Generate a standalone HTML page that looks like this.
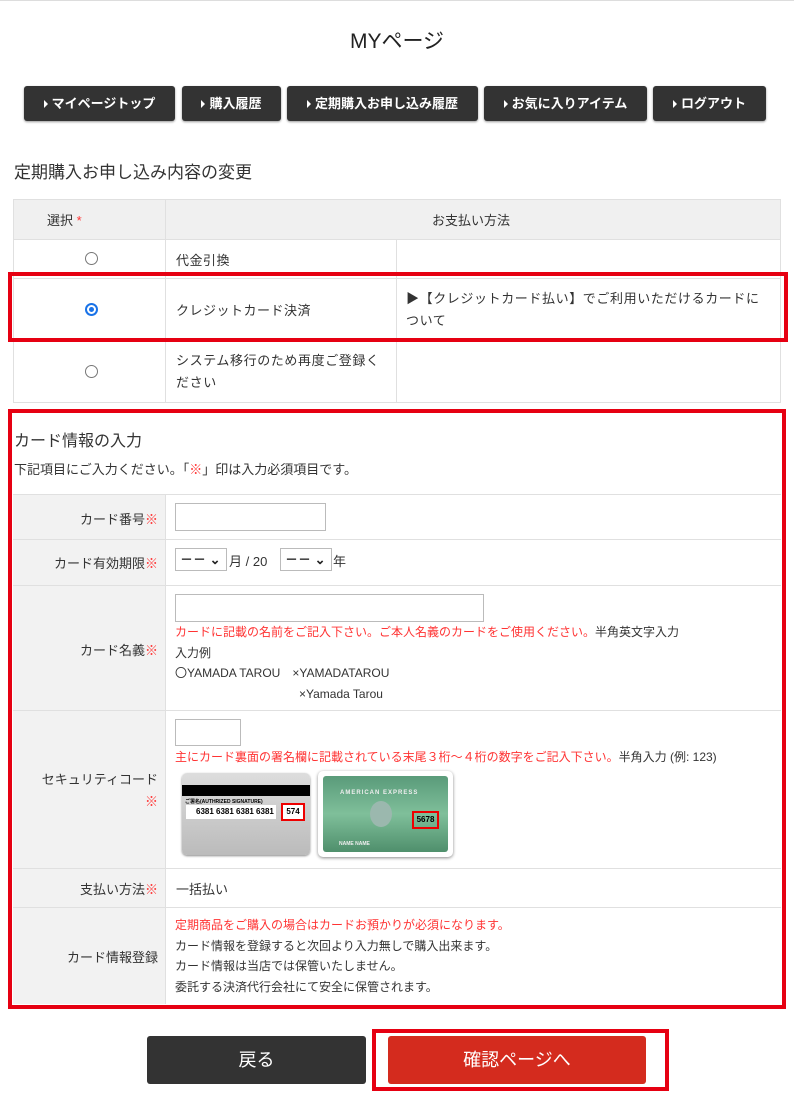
<!DOCTYPE html>
<html><head><meta charset="utf-8"><style>
*{box-sizing:border-box;margin:0;padding:0}
body{width:794px;height:1107px;background:#fff;font-family:"Liberation Sans","Noto Sans CJK JP",sans-serif;color:#333;position:relative;overflow:hidden;font-size:13px}
.a{position:absolute}
.nav{position:absolute;top:86px;height:35px;background:#333;border-radius:3px;color:#fff;font-weight:bold;font-size:13px;line-height:35px;text-align:center;box-shadow:0 1px 2px #999}
.nav:before{content:"";display:inline-block;border-left:4px solid #fff;border-top:4px solid transparent;border-bottom:4px solid transparent;margin-right:4px;vertical-align:0}
.red{position:absolute;border:4px solid #e60012}
.ln{position:absolute;background:#e0e0e0}
.r{color:#f33}
.sel{position:absolute;height:23px;border:1px solid #bbb;background:#fff;font-size:13px;line-height:21px;padding-left:4px;font-weight:bold;color:#222}
</style></head><body>
<div class="a" style="top:0;left:0;width:794px;height:1px;background:#ddd"></div>
<div class="a" style="top:25px;left:0;width:794px;text-align:center;font-size:21px;color:#222">MYページ</div>
<div class="nav" style="left:24px;width:151px">マイページトップ</div>
<div class="nav" style="left:182px;width:99px">購入履歴</div>
<div class="nav" style="left:287px;width:191px">定期購入お申し込み履歴</div>
<div class="nav" style="left:484px;width:163px">お気に入りアイテム</div>
<div class="nav" style="left:653px;width:113px">ログアウト</div>
<div class="a" style="top:158px;left:14px;font-size:17px">定期購入お申し込み内容の変更</div>
<div class="a" style="top:199px;left:13px;width:768px;height:204px;border:1px solid #e0e0e0"></div>
<div class="a" style="top:200px;left:14px;width:766px;height:39px;background:#f0f0f0"></div>
<div class="ln" style="top:239px;left:13px;width:768px;height:1px"></div>
<div class="ln" style="top:278px;left:13px;width:768px;height:1px"></div>
<div class="ln" style="top:340px;left:13px;width:768px;height:1px"></div>
<div class="ln" style="top:199px;left:165px;width:1px;height:204px"></div>
<div class="ln" style="top:239px;left:396px;width:1px;height:164px"></div>
<div class="a" style="top:210px;left:47px">選択 <span class="r">*</span></div>
<div class="a" style="top:210px;left:432px">お支払い方法</div>
<div class="a" style="top:252px;left:85px;width:13px;height:13px;border:1px solid #777;border-radius:50%"></div>
<div class="a" style="top:250px;left:176px;letter-spacing:0.5px">代金引換</div>
<div class="a" style="top:303px;left:85px;width:13px;height:13px;border:2px solid #1a73e8;border-radius:50%;padding:2px"><div style="width:5px;height:5px;background:#1a73e8;border-radius:50%"></div></div>
<div class="a" style="top:300px;left:176px;letter-spacing:0.5px">クレジットカード決済</div>
<div class="a" style="top:288px;left:406px;width:362px;line-height:22px;letter-spacing:0.6px">▶【クレジットカード払い】でご利用いただけるカードについて</div>
<div class="a" style="top:365px;left:85px;width:13px;height:13px;border:1px solid #777;border-radius:50%"></div>
<div class="a" style="top:350px;left:176px;width:215px;line-height:22px;letter-spacing:0.6px">システム移行のため再度ご登録ください</div>
<div class="red" style="top:272px;left:8px;width:780px;height:70px"></div>
<div class="a" style="top:427px;left:14px;font-size:16px">カード情報の入力</div>
<div class="a" style="top:459px;left:14px">下記項目にご入力ください。「<span class="r">※</span>」印は入力必須項目です。</div>
<div class="a" style="top:494px;left:13px;width:153px;height:510px;background:#f2f2f2"></div>
<div class="ln" style="top:494px;left:13px;width:768px;height:1px"></div>
<div class="ln" style="top:539px;left:13px;width:768px;height:1px"></div>
<div class="ln" style="top:585px;left:13px;width:768px;height:1px"></div>
<div class="ln" style="top:710px;left:13px;width:768px;height:1px"></div>
<div class="ln" style="top:868px;left:13px;width:768px;height:1px"></div>
<div class="ln" style="top:907px;left:13px;width:768px;height:1px"></div>
<div class="ln" style="top:494px;left:165px;width:1px;height:510px"></div>
<div class="a" style="top:509px;left:14px;width:144px;text-align:right">カード番号<span class="r">※</span></div>
<div class="a" style="top:503px;left:175px;width:151px;height:28px;border:1px solid #bbb"></div>
<div class="a" style="top:553px;left:14px;width:144px;text-align:right">カード有効期限<span class="r">※</span></div>
<div class="sel" style="top:548px;left:175px;width:52px">－－ ⌄</div>
<div class="a" style="top:551px;left:229px">月 / 20</div>
<div class="sel" style="top:548px;left:280px;width:52px">－－ ⌄</div>
<div class="a" style="top:551px;left:333px">年</div>
<div class="a" style="top:640px;left:14px;width:144px;text-align:right">カード名義<span class="r">※</span></div>
<div class="a" style="top:594px;left:175px;width:309px;height:28px;border:1px solid #bbb"></div>
<div class="a" style="top:622px;left:175px;line-height:20.5px;font-size:12px"><span class="r">カードに記載の名前をご記入下さい。ご本人名義のカードをご使用ください。</span>半角英文字入力<br>入力例<br>〇YAMADA TAROU　×YAMADATAROU<br><span style="padding-left:124px">×Yamada Tarou</span></div>
<div class="a" style="top:769px;left:14px;width:144px;text-align:right;line-height:22px">セキュリティコード<br><span class="r">※</span></div>
<div class="a" style="top:719px;left:175px;width:66px;height:27px;border:1px solid #bbb"></div>
<div class="a" style="top:748px;left:175px;font-size:12px"><span class="r">主にカード裏面の署名欄に記載されている末尾３桁～４桁の数字をご記入下さい。</span>半角入力 (例: 123)</div>
<div class="a" style="top:773px;left:182px;width:128px;height:82px;border-radius:5px;background:linear-gradient(#ddd,#bbb);box-shadow:0 1px 2px #888"></div>
<div class="a" style="top:785px;left:182px;width:128px;height:11px;background:#000"></div>
<div class="a" style="top:798px;left:185px;font-size:5px;color:#000;font-weight:bold">ご署名(AUTHRIZED SIGNATURE)</div>
<div class="a" style="top:805px;left:186px;width:90px;height:14px;background:#fff;font-size:8px;font-weight:bold;color:#000;line-height:14px;padding-left:10px">6381 6381 6381 6381</div>
<div class="a" style="top:803px;left:281px;width:24px;height:18px;background:#fff;border:2px solid #e00;font-size:8px;font-weight:bold;color:#000;line-height:14px;text-align:center">574</div>
<div class="a" style="top:771px;left:318px;width:135px;height:86px;border-radius:5px;background:#fff;box-shadow:0 1px 3px #888"></div>
<div class="a" style="top:776px;left:323px;width:125px;height:76px;background:linear-gradient(#5a9b7a,#7fbf9a,#4f8f6c);border-radius:3px"></div>
<div class="a" style="top:790px;left:340px;font-size:6px;color:#eee;font-weight:bold;letter-spacing:1px">AMERICAN EXPRESS</div>
<div class="a" style="top:801px;left:370px;width:22px;height:26px;border-radius:50%;background:#9bb8ae"></div>
<div class="a" style="top:811px;left:412px;width:27px;height:18px;border:2px solid #e00;font-size:8px;font-weight:bold;color:#000;line-height:14px;text-align:center">5678</div>
<div class="a" style="top:841px;left:339px;font-size:5px;color:#eee;font-weight:bold">NAME NAME</div>
<div class="a" style="top:879px;left:14px;width:144px;text-align:right">支払い方法<span class="r">※</span></div>
<div class="a" style="top:879px;left:176px">一括払い</div>
<div class="a" style="top:947px;left:14px;width:144px;text-align:right">カード情報登録</div>
<div class="a" style="top:915px;left:175px;font-size:12px;line-height:20.5px"><span class="r">定期商品をご購入の場合はカードお預かりが必須になります。</span><br>カード情報を登録すると次回より入力無しで購入出来ます。<br>カード情報は当店では保管いたしません。<br>委託する決済代行会社にて安全に保管されます。</div>
<div class="red" style="top:409px;left:8px;width:778px;height:600px"></div>
<div class="a" style="top:1036px;left:147px;width:219px;height:48px;background:#333;border-radius:3px;color:#fff;font-size:18px;text-align:center;line-height:48px">戻る</div>
<div class="a" style="top:1036px;left:388px;width:258px;height:48px;background:#d42b1e;border-radius:3px;color:#fff;font-size:18px;text-align:center;line-height:48px">確認ページへ</div>
<div class="red" style="top:1029px;left:372px;width:297px;height:62px"></div>
</body></html>
